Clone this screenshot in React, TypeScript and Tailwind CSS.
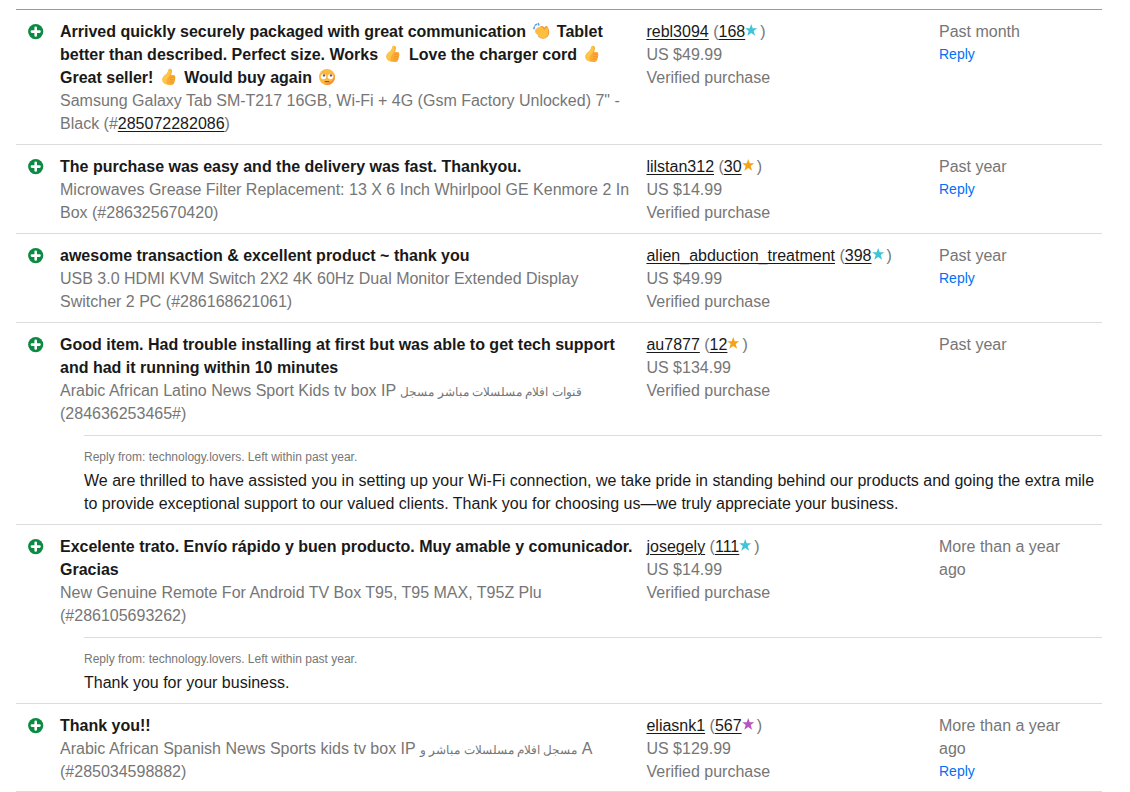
import React from "react";

type EmojiName = "clap" | "thumb" | "eyeroll";

interface Reply {
  from: string;
  text: string;
}

interface Feedback {
  comment: React.ReactNode;
  item: React.ReactNode;
  buyer: string;
  score: number;
  starClass: string;
  price: string;
  when: string;
  canReply?: boolean;
  reply?: Reply;
}

const Emoji: React.FC<{ name: EmojiName }> = ({ name }) => (
  <svg
    viewBox="0 0 22 18"
    role="img"
    aria-label={name}
    className="inline-block w-[22px] h-[18px] align-[-3px]"
  >
    {name === "thumb" && (
      <>
        <path
          d="M11.8 .8c1.4-.1 2.300.9 2.200 2.300-.1 1.400-.5 2.700-.9 3.800h2.600c1.300 0 1.900 1.300 1.200 2.200.8.7.7 1.900-.1 2.500.5.9.1 1.800-.6 2.200.2 1.700-.8 3.100-2.600 3.200-2 .1-4-.1-5.600-.7-2.300-.8-3.600-2.200-3.600-4.700 0-2.400 1.500-3.400 3-4.800 1.500-1.400 2.300-2.400 2.900-4.400.2-.7.600-1.500 1.500-1.600z"
          fill="#f9ab33"
        />
        <path
          d="M11.800 .8c-.9.1-1.300.9-1.500 1.600-.6 2-1.400 3-2.900 4.400-1.500 1.400-3 2.400-3 4.800 0 2.500 1.300 3.900 3.600 4.700l1.600.4c-1.300-1.900-1.300-4.300-.1-6.300 1.500-1.700 3.200-3.500 3.100-6.900 0-1.100-.2-1.900-.8-2.700z"
          fill="#fdc649"
        />
        <path
          d="M12.500 9.300h4.200M12.400 11.700h4.100M12.200 14h3.800"
          stroke="#ec8a2a"
          strokeWidth="0.7"
          strokeLinecap="round"
        />
      </>
    )}
    {name === "clap" && (
      <>
        <path
          d="M3.800 6.600l.7-1.700M5.200 3.200l1.500-.8M8.400 1.400l.5 1.700"
          stroke="#4f9fee"
          strokeWidth="1.500"
          strokeLinecap="round"
        />
        <path
          d="M9.500 5.500c.5-1.500 2-2 3.200-1.300l2.100 1.300c.3-1.300 1.600-1.800 2.500-1 1.300 1.800 2 4.300 1.900 6.500-.2 3-2.300 5.200-5.400 5.700-2.400.3-4.500-.8-5.800-2.400z"
          fill="#f7983a"
        />
        <path
          d="M5.600 8.200c-.7-1.100.4-2.200 1.500-1.500-.1-1.300 1.200-1.900 2.100-1 .2-1.100 1.500-1.400 2.300-.6l3.600 3.200c.1-1.400.3-2.500 1.300-2.700 1.200-.1 1.400 1 1.500 2.100.2 2.300.4 4.400-.8 6.200-1.900 2.700-5.400 2.900-7.700.8l-3.700-3.600c-.8-.9-.9-2-.1-2.900z"
          fill="#fdbf42"
        />
        <path
          d="M7.100 6.700l3.600 3.500M9.200 5.700l3.400 3.400M5.600 8.200l3.300 3.300"
          stroke="#f8ac38"
          strokeWidth="0.500"
          strokeLinecap="round"
        />
      </>
    )}
    {name === "eyeroll" && (
      <>
        <circle cx="11" cy="9" r="8" fill="#fdb840" />
        <path
          d="M11 17a8 8 0 0 0 8-8c0-1-.2-2-.5-2.900C18 11.500 15 15 8 16.400c1 .4 2 .6 3 .6z"
          fill="#f8923c"
        />
        <circle cx="7.500" cy="8.600" r="2.700" fill="#fff" />
        <circle cx="14.500" cy="8.600" r="2.700" fill="#fff" />
        <circle cx="8" cy="7.400" r="1.200" fill="#7a5260" />
        <circle cx="15" cy="7.400" r="1.200" fill="#7a5260" />
        <path
          d="M9.200 13.700h3.600"
          stroke="#a04f38"
          strokeWidth="1.300"
          fill="none"
          strokeLinecap="round"
        />
      </>
    )}
  </svg>
);

const PositiveIcon: React.FC = () => (
  <svg
    viewBox="0 0 16 16"
    role="img"
    aria-label="Positive feedback"
    className="block w-4 h-4"
  >
    <circle cx="7.700" cy="7.600" r="7.600" fill="#0b8a43" />
    <path
      d="M7.700 3.800v7.600M3.900 7.600h7.600"
      stroke="#fff"
      strokeWidth="2.600"
      strokeLinecap="round"
    />
  </svg>
);

const Star: React.FC<{ className: string }> = ({ className }) => (
  <svg
    viewBox="0 0 15 14"
    aria-hidden="true"
    className={`inline-block w-[15px] h-3.5 align-[-1px] ${className}`}
  >
    <path
      d="M6.200 0l1.500 4.300h4.500L8.700 7.100l1.400 4.700-3.900-2.800-3.900 2.800 1.400-4.700L.2 4.300h4.500z"
      fill="currentColor"
    />
  </svg>
);

const linkClass =
  "text-[#191919] underline underline-offset-2 decoration-1";

const feedback: Feedback[] = [
  {
    comment: (
      <>
        Arrived quickly securely packaged with great communication{" "}
        <Emoji name="clap" /> Tablet better than described. Perfect size. Works{" "}
        <Emoji name="thumb" /> Love the charger cord <Emoji name="thumb" />{" "}
        Great seller! <Emoji name="thumb" /> Would buy again{" "}
        <Emoji name="eyeroll" />
      </>
    ),
    item: (
      <>
        Samsung Galaxy Tab SM-T217 16GB, Wi-Fi + 4G (Gsm Factory Unlocked) 7" -
        Black (#
        <a href="#285072282086" className={linkClass}>
          285072282086
        </a>
        )
      </>
    ),
    buyer: "rebl3094",
    score: 168,
    starClass: "text-[#3fc4da]",
    price: "US $49.99",
    when: "Past month",
    canReply: true,
  },
  {
    comment: "The purchase was easy and the delivery was fast. Thankyou.",
    item: "Microwaves Grease Filter Replacement: 13 X 6 Inch Whirlpool GE Kenmore 2 In Box (#286325670420)",
    buyer: "lilstan312",
    score: 30,
    starClass: "text-[#f5a313]",
    price: "US $14.99",
    when: "Past year",
    canReply: true,
  },
  {
    comment: "awesome transaction & excellent product ~ thank you",
    item: "USB 3.0 HDMI KVM Switch 2X2 4K 60Hz Dual Monitor Extended Display Switcher 2 PC (#286168621061)",
    buyer: "alien_abduction_treatment",
    score: 398,
    starClass: "text-[#3fc4da]",
    price: "US $49.99",
    when: "Past year",
    canReply: true,
  },
  {
    comment:
      "Good item. Had trouble installing at first but was able to get tech support and had it running within 10 minutes",
    item: (
      <>
        Arabic African Latino News Sport Kids tv box IP{" "}
        <span lang="ar" className="text-xs leading-none">
          قنوات افلام مسلسلات مباشر مسجل
        </span>{" "}
        (#284636253465)
      </>
    ),
    buyer: "au7877",
    score: 12,
    starClass: "text-[#f5a313]",
    price: "US $134.99",
    when: "Past year",
    reply: {
      from: "Reply from: technology.lovers. Left within past year.",
      text: "We are thrilled to have assisted you in setting up your Wi-Fi connection, we take pride in standing behind our products and going the extra mile to provide exceptional support to our valued clients. Thank you for choosing us—we truly appreciate your business.",
    },
  },
  {
    comment:
      "Excelente trato. Envío rápido y buen producto. Muy amable y comunicador. Gracias",
    item: "New Genuine Remote For Android TV Box T95, T95 MAX, T95Z Plu (#286105693262)",
    buyer: "josegely",
    score: 111,
    starClass: "text-[#3fc4da]",
    price: "US $14.99",
    when: "More than a year ago",
    reply: {
      from: "Reply from: technology.lovers. Left within past year.",
      text: "Thank you for your business.",
    },
  },
  {
    comment: "Thank you!!",
    item: (
      <>
        Arabic African Spanish News Sports kids tv box IP{" "}
        <span lang="ar" className="text-xs leading-none">
          مسجل افلام مسلسلات مباشر و
        </span>{" "}
        A (#285034598882)
      </>
    ),
    buyer: "eliasnk1",
    score: 567,
    starClass: "text-[#b854c0]",
    price: "US $129.99",
    when: "More than a year ago",
    canReply: true,
  },
];

const FeedbackEntry: React.FC<{ entry: Feedback }> = ({ entry }) => (
  <tbody className="group border-b border-[#dcdcdc]">
    <tr className="align-top">
      <td className="pt-3.5 pl-3">
        <PositiveIcon />
      </td>
      <td
        className={
          entry.reply
            ? "py-2.5 pr-2"
            : "pt-2.5 pb-[9px] pr-2 group-last:pb-2"
        }
      >
        <p className="font-bold text-[#191919]">{entry.comment}</p>
        <p>{entry.item}</p>
      </td>
      <td className="pt-2.5">
        <p>
          <a href={`#${entry.buyer}`} className={linkClass}>
            {entry.buyer}
          </a>{" "}
          (
          <a href={`#${entry.buyer}-score`} className={linkClass}>
            {entry.score}
          </a>
          <Star className={entry.starClass} />)
        </p>
        <p>{entry.price}</p>
        <p>Verified purchase</p>
      </td>
      <td className="pt-2.5 pr-6">
        <p>{entry.when}</p>
        {entry.canReply && (
          <button
            type="button"
            className="block text-sm leading-[23px] text-[#0070f5] cursor-pointer"
          >
            Reply
          </button>
        )}
      </td>
    </tr>
    {entry.reply && (
      <tr>
        <td colSpan={4} className="pl-[68px]">
          <div className="border-t border-[#dcdcdc] pt-2.5 pb-[9px]">
            <p className="text-xs leading-[23px]">{entry.reply.from}</p>
            <p className="text-[#191919]">{entry.reply.text}</p>
          </div>
        </td>
      </tr>
    )}
  </tbody>
);

export default function App() {
  return (
    <main className="bg-white pt-[9px] pl-4 pr-7 text-base leading-[23px] text-[#767676] font-['Liberation_Sans',Arial,sans-serif]">
      <table className="w-full table-fixed border-t border-[#999999]">
        <colgroup>
          <col className="w-11" />
          <col className="w-[54%]" />
          <col />
          <col className="w-[163px]" />
        </colgroup>
        {feedback.map((entry) => (
          <FeedbackEntry key={entry.buyer} entry={entry} />
        ))}
      </table>
    </main>
  );
}
